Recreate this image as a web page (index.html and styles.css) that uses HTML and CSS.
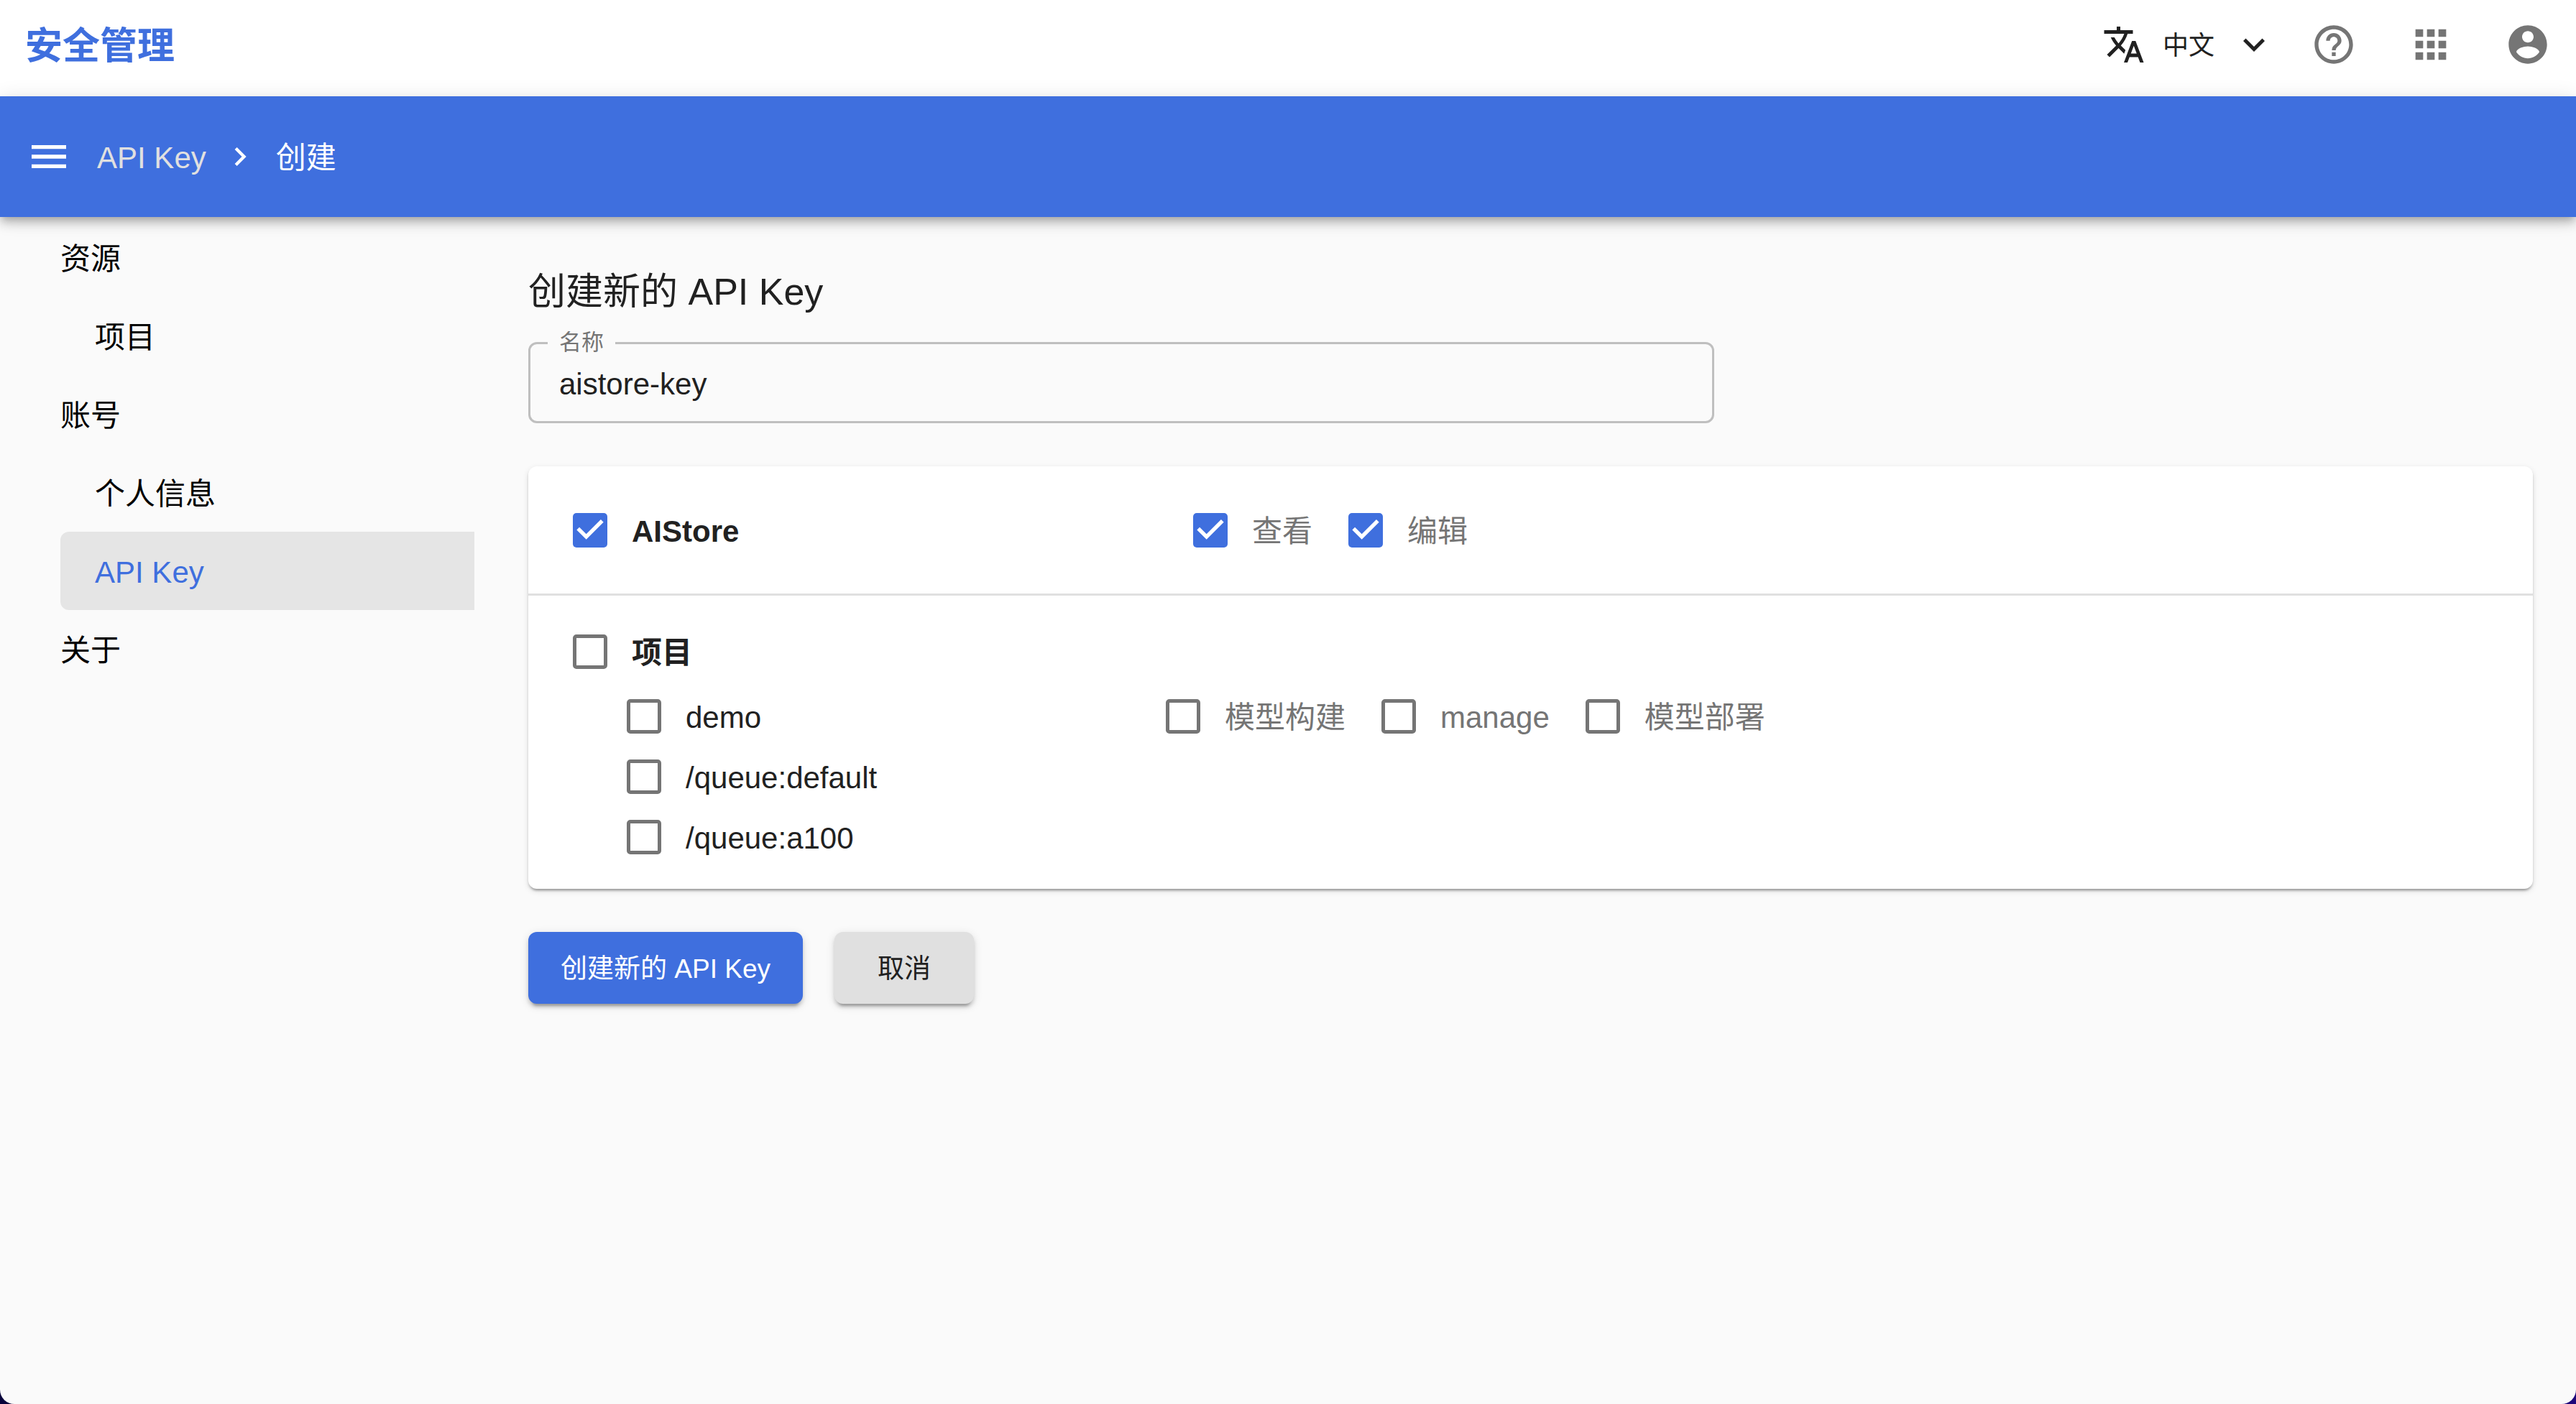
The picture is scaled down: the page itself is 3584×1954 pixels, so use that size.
FILE: index.html
```html
<!DOCTYPE html>
<html lang="zh-CN">
<head>
<meta charset="utf-8">
<meta name="viewport" content="width=device-width, initial-scale=1">
<title>安全管理</title>
<link rel="stylesheet" href="styles.css">
</head>
<body>
<header class="topbar">
  <a class="brand" href="#">安全管理</a>
  <div class="tools">
    <label class="language">
      <svg class="icon-md" viewBox="0 0 24 24" aria-hidden="true"><path d="M12.87 15.07l-2.54-2.51.03-.03c1.74-1.94 2.98-4.17 3.71-6.53H17V4h-7V2H8v2H1v1.99h11.17C11.5 7.92 10.44 9.75 9 11.35 8.07 10.32 7.3 9.19 6.69 8h-2c.73 1.63 1.73 3.17 2.98 4.56l-5.09 5.02L4 19l5-5 3.11 3.11.76-2.04zM18.5 10h-2L12 22h2l1.12-3h4.75L21 22h2l-4.5-12zm-2.62 7l1.62-4.33L19.12 17h-3.24z"/></svg>
      <select class="language-select" aria-label="语言"><option>中文</option></select>
      <svg class="icon-md" viewBox="0 0 24 24" aria-hidden="true"><path d="M16.59 8.59L12 13.17 7.41 8.59 6 10l6 6 6-6z"/></svg>
    </label>
    <button class="icon-button" type="button" aria-label="帮助">
      <svg class="icon-lg" viewBox="0 0 24 24"><path d="M11 18h2v-2h-2v2zm1-16C6.48 2 2 6.48 2 12s4.48 10 10 10 10-4.48 10-10S17.52 2 12 2zm0 18c-4.41 0-8-3.59-8-8s3.59-8 8-8 8 3.59 8 8-3.59 8-8 8zm0-14c-2.21 0-4 1.79-4 4h2c0-1.1.9-2 2-2s2 .9 2 2c0 2-3 1.75-3 5h2c0-2.25 3-2.5 3-5 0-2.21-1.79-4-4-4z"/></svg>
    </button>
    <button class="icon-button" type="button" aria-label="应用">
      <svg class="icon-lg" viewBox="0 0 24 24"><path d="M4 8h4V4H4v4zm6 12h4v-4h-4v4zm-6 0h4v-4H4v4zm0-6h4v-4H4v4zm6 0h4v-4h-4v4zm6-10v4h4V4h-4zm-6 4h4V4h-4v4zm6 6h4v-4h-4v4zm0 6h4v-4h-4v4z"/></svg>
    </button>
    <button class="icon-button" type="button" aria-label="账号">
      <svg class="icon-lg" viewBox="0 0 24 24"><path d="M12 2C6.48 2 2 6.48 2 12s4.48 10 10 10 10-4.48 10-10S17.52 2 12 2zm0 3c1.66 0 3 1.34 3 3s-1.34 3-3 3-3-1.34-3-3 1.34-3 3-3zm0 14.2c-2.5 0-4.71-1.28-6-3.22.03-1.99 4-3.08 6-3.08 1.99 0 5.97 1.09 6 3.08-1.29 1.94-3.5 3.22-6 3.22z"/></svg>
    </button>
  </div>
</header>

<nav class="appbar" aria-label="面包屑">
  <button class="icon-button menu-button" type="button" aria-label="菜单">
    <svg class="icon-lg" viewBox="0 0 24 24"><path d="M3 18h18v-2H3v2zm0-5h18v-2H3v2zm0-7v2h18V6H3z"/></svg>
  </button>
  <a class="crumb crumb-link" href="#">API Key</a>
  <svg class="crumb-arrow" viewBox="0 0 24 24" aria-hidden="true"><path d="M10 6L8.59 7.41 13.17 12l-4.58 4.59L10 18l6-6z"/></svg>
  <span class="crumb">创建</span>
</nav>

<div class="layout">
  <nav class="sidebar" aria-label="主导航">
    <a class="nav-item" href="#">资源</a>
    <a class="nav-item nav-child" href="#">项目</a>
    <a class="nav-item" href="#">账号</a>
    <a class="nav-item nav-child" href="#">个人信息</a>
    <a class="nav-item nav-child active" href="#" aria-current="page">API Key</a>
    <a class="nav-item" href="#">关于</a>
  </nav>

  <main class="main">
    <form>
      <h1 class="title">创建新的 API Key</h1>
      <fieldset class="field">
        <legend class="field-legend"><label for="key-name">名称</label></legend>
        <input class="field-input" id="key-name" type="text" value="aistore-key">
      </fieldset>

      <div class="card">
        <section class="service">
          <label class="check check-strong"><input class="box" type="checkbox" checked><span class="check-text">AIStore</span></label>
          <div class="permissions">
            <label class="check"><input class="box" type="checkbox" checked><span class="check-text">查看</span></label>
            <label class="check"><input class="box" type="checkbox" checked><span class="check-text">编辑</span></label>
          </div>
        </section>
        <section class="projects">
          <label class="check check-strong"><input class="box" type="checkbox"><span class="check-text">项目</span></label>
          <div class="project-list">
            <div class="project">
              <label class="check"><input class="box" type="checkbox"><span class="check-text">demo</span></label>
              <div class="permissions">
                <label class="check"><input class="box" type="checkbox"><span class="check-text">模型构建</span></label>
                <label class="check"><input class="box" type="checkbox"><span class="check-text">manage</span></label>
                <label class="check"><input class="box" type="checkbox"><span class="check-text">模型部署</span></label>
              </div>
            </div>
            <div class="project">
              <label class="check"><input class="box" type="checkbox"><span class="check-text">/queue:default</span></label>
            </div>
            <div class="project">
              <label class="check"><input class="box" type="checkbox"><span class="check-text">/queue:a100</span></label>
            </div>
          </div>
        </section>
      </div>

      <div class="actions">
        <button class="button button-primary" type="submit">创建新的 API Key</button>
        <button class="button button-cancel" type="button">取消</button>
      </div>
    </form>
  </main>
</div>
</body>
</html>
```
FILE: styles.css
```css
:root {
  --blue: #3f6fde;
  --text: #212121;
  --muted: #757575;
  --surface: #fafafa;
}

* {
  box-sizing: border-box;
}

html {
  background: linear-gradient(to right, #07023a, #1d067a);
}

body {
  margin: 0;
  min-height: 100vh;
  border-radius: 0 0 20px 20px;
  background: var(--surface);
  color: var(--text);
  font-family: "Liberation Sans", "Noto Sans CJK SC", sans-serif;
  font-size: 42px;
  line-height: 60px;
}

a {
  color: inherit;
  text-decoration: none;
}

button,
input,
select {
  font: inherit;
  color: inherit;
}

svg {
  display: block;
  fill: currentColor;
}

.icon-md {
  width: 60px;
  height: 60px;
}

.icon-lg {
  width: 64px;
  height: 64px;
}

.icon-button {
  padding: 0;
  border: 0;
  background: none;
  color: var(--muted);
}

.topbar {
  display: flex;
  align-items: center;
  justify-content: space-between;
  padding: 30px 35px 40px;
  background: #fff;
}

.brand {
  padding-top: 4px;
  color: var(--blue);
  font-size: 52px;
  font-weight: 700;
}

.tools {
  display: flex;
  align-items: center;
  gap: 71px;
}

.language {
  display: flex;
  align-items: center;
  gap: 24px;
  margin-right: -22px;
  font-size: 36px;
}

.language-select {
  appearance: none;
  padding: 4px 0 0;
  border: 0;
  background: none;
}

.appbar {
  position: relative;
  display: flex;
  align-items: center;
  height: 168px;
  padding: 0 36px;
  background: var(--blue);
  color: #fff;
  box-shadow: 0 5px 10px -3px rgba(0, 0, 0, 0.2), 0 10px 13px rgba(0, 0, 0, 0.14), 0 3px 26px rgba(0, 0, 0, 0.12);
}

.menu-button {
  margin-right: 35px;
  color: #fff;
}

.crumb {
  padding-top: 4px;
}

.crumb-link {
  color: #e0e0e0;
}

.crumb-arrow {
  width: 52px;
  height: 52px;
  margin: 0 24px 0 21px;
}

.layout {
  display: flex;
}

.sidebar {
  display: flex;
  flex: 0 0 660px;
  flex-direction: column;
  padding: 2px 0 0 84px;
  color: #000;
}

.nav-item {
  padding-top: 4px;
  line-height: 105px;
}

.nav-child {
  padding-left: 48px;
}

.nav-item.active {
  border-radius: 12px 0 0 12px;
  background: #e5e5e5;
  color: var(--blue);
}

.main {
  flex: 1;
  min-width: 0;
  padding: 73px 60px 60px 75px;
}

.title {
  margin: 0 0 20px;
  font-size: 52px;
  font-weight: 400;
  line-height: 62px;
}

.field {
  max-width: 1650px;
  min-width: 0;
  margin: 0 0 60px;
  padding: 0;
  border: 3px solid #bfbfbf;
  border-radius: 12px;
}

.field-legend {
  margin-left: 24px;
  padding: 0 16px;
  color: var(--muted);
  font-size: 31px;
  line-height: 40px;
}

.field-input {
  display: block;
  width: 100%;
  height: 89px;
  padding: 0 40px 14px;
  border: 0;
  outline: 0;
  background: none;
}

.card {
  border-radius: 12px;
  background: #fff;
  box-shadow: 0 5px 3px -3px rgba(0, 0, 0, 0.2), 0 3px 3px rgba(0, 0, 0, 0.14), 0 3px 8px rgba(0, 0, 0, 0.12);
}

.service {
  display: grid;
  grid-template-columns: 863px 1fr;
  align-items: center;
  height: 180px;
  padding: 0 62px;
  border-bottom: 3px solid #e0e0e0;
}

.projects {
  padding: 36px 62px 30px;
}

.project-list {
  margin-top: 6px;
  padding-left: 75px;
}

.project {
  display: grid;
  grid-template-columns: 750px 1fr;
}

.permissions {
  display: flex;
  gap: 50px;
  color: var(--muted);
}

.check {
  display: flex;
  align-items: center;
  gap: 34px;
}

.check-strong {
  font-weight: 700;
}

.check-text {
  padding-top: 4px;
  line-height: 80px;
}

.box {
  appearance: none;
  display: grid;
  flex: none;
  width: 48px;
  height: 48px;
  margin: 0;
  border: 5px solid var(--muted);
  border-radius: 5px;
}

.box:checked {
  border: 0;
  background: var(--blue);
}

.box:checked::before {
  content: "";
  background: #fff;
  clip-path: polygon(38.9% 77.8%, 11.1% 50%, 18.9% 42.2%, 38.9% 62.1%, 81.1% 19.9%, 88.9% 27.8%);
}

.actions {
  display: flex;
  gap: 44px;
  margin-top: 60px;
}

.button {
  height: 100px;
  padding: 4px 45px 0;
  border: 0;
  border-radius: 12px;
  font-size: 37px;
  box-shadow: 0 8px 3px -5px rgba(0, 0, 0, 0.2), 0 5px 5px rgba(0, 0, 0, 0.14), 0 3px 13px rgba(0, 0, 0, 0.12);
}

.button-primary {
  background: var(--blue);
  color: #fff;
}

.button-cancel {
  padding: 4px 60px 0;
  background: #e0e0e0;
}
```
